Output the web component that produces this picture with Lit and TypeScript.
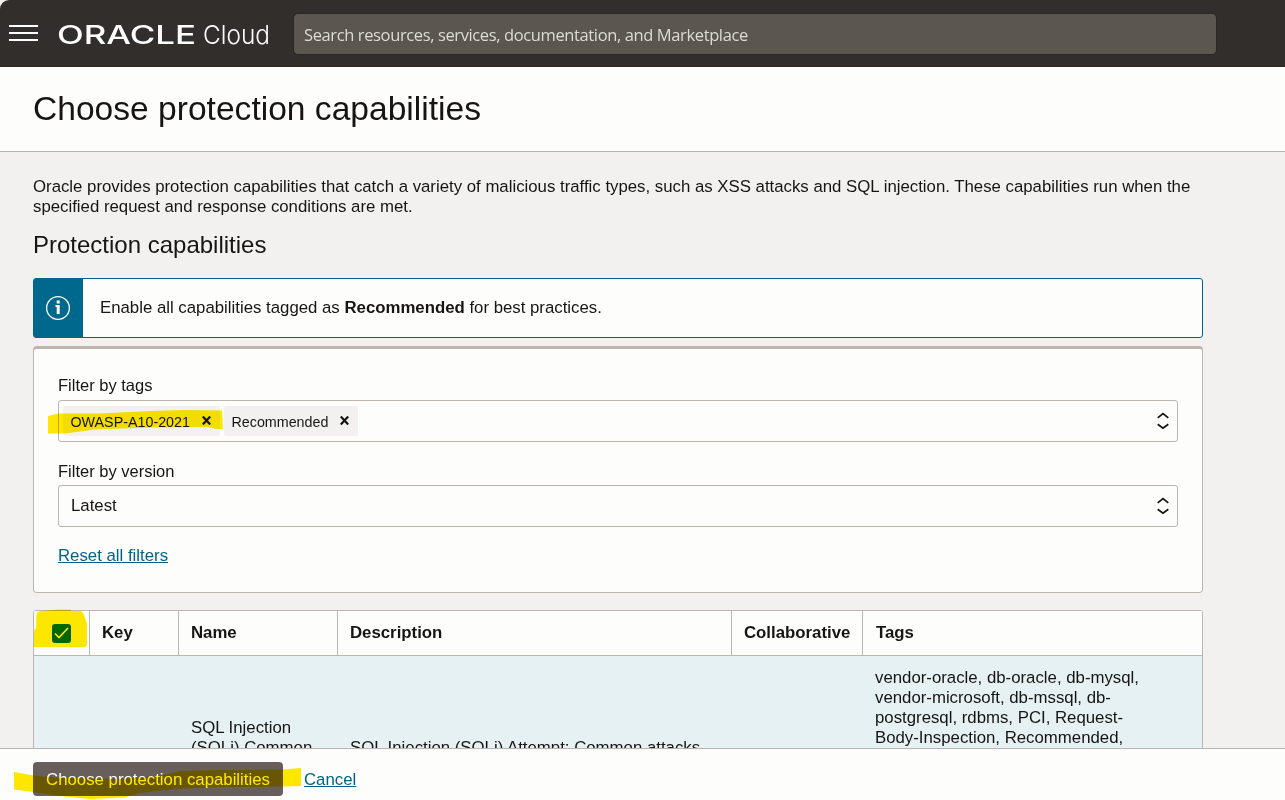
import { LitElement, html, css, svg } from "lit";
import { customElement } from "lit/decorators.js";

const stepper = html`<svg class="stepper" width="14" height="20" viewBox="0 0 14 20">
  <path d="M1.700 6.900 7 2.500l5.300 4.400M1.700 13.300 7 17.300l5.300-4" />
</svg>`;

const cross = html`<svg class="cross" width="9" height="9" viewBox="0 0 9 9">
  <path d="M.8 .5 8.200 8.500M8.200 .5 .8 8.500" />
</svg>`;

@customElement("app-root")
export class AppRoot extends LitElement {
  static styles = css`
    :host {
      display: flex;
      flex-direction: column;
      position: relative;
      width: 1285px;
      height: 800px;
      overflow: hidden;
      background: #f3f1f0;
      color: #161513;
      font: 16.8px/20px "Liberation Sans", Arial, sans-serif;
      isolation: isolate;
    }
    * { box-sizing: border-box; }
    h1, h2, p { margin: 0; font-weight: 400; }
    a { color: #006488; text-decoration: underline; text-underline-offset: 1px; text-decoration-thickness: 1px; }
    .bar {
      flex: none;
      display: flex;
      align-items: flex-start;
      height: 67px;
      background: linear-gradient(#322e2b 65px, #292623);
      border-top-left-radius: 9px;
      padding: 13px 0 0 9px;
    }
    .burger { margin-top: 11px; flex: none; }
    .logo { flex: none; margin: 0 0 0 18px; overflow: visible; }
    .brand { font-family: Inter, sans-serif; font-weight: 500; font-size: 25.5px; fill: #fff; }
    .cloud { font-family: Inter, sans-serif; font-weight: 300; font-size: 26px; fill: #fff; }
    .search {
      margin-left: 20px;
      width: 924px;
      height: 42px;
      background: #5b564f;
      border: 1px solid #292623;
      border-radius: 5px;
      color: #dedbd7;
      font: 16.5px/40px "Open Sans", "Noto Sans", sans-serif;
      letter-spacing: -0.38px;
      padding: 1px 0 0 10px;
      white-space: nowrap;
    }
    .title {
      flex: none;
      height: 85px;
      background: #fdfdfc;
      border-bottom: 1px solid #b9b6b1;
      padding: 22px 33px 0;
    }
    .title h1 { font-size: 33.6px; line-height: 40px; white-space: nowrap; }
    .content { flex: 1; min-height: 0; overflow: hidden; padding: 25px 82px 0 33px; }
    .lead { width: 1170px; white-space: nowrap; }
    h2 { font-size: 24px; line-height: 28px; margin-top: 14px; }
    .info {
      display: flex;
      align-items: stretch;
      height: 60px;
      margin-top: 19px;
      border: 1px solid #006488;
      border-radius: 3px;
      background: #fdfdfc;
    }
    .info-icon { width: 49px; background: #00688c; display: flex; align-items: center; justify-content: center; }
    .info-icon svg { margin-right: 2px; }
    .info p { padding: 19px 0 0 17px; }
    .filters {
      margin-top: 8px;
      height: 247px;
      border: 1px solid #bcb6b1;
      border-top-width: 3px;
      border-radius: 4px;
      background: #fdfdfc;
      padding: 26px 24px 0;
    }
    .label { font-size: 16.5px; }
    .box {
      display: flex;
      align-items: center;
      height: 42px;
      margin: 5px 0 19px;
      border: 1px solid #bcb6b1;
      border-radius: 3px;
      padding: 0 7px 0 4px;
    }
    .version { margin: 4px 0 19px; padding-left: 12px; }
    .chip {
      display: flex;
      align-items: center;
      height: 30px;
      background: #f3f1f0;
      border-radius: 2px;
      font-size: 14.3px;
      padding: 2px 9px 0 7.5px;
      margin-right: 4.5px;
    }
    .chip + .chip { padding-left: 7px; }
    .chip .cross { margin: -4px 0 0 12px; }
    .cross path { fill: none; stroke: #161513; stroke-width: 2.2; }
    .stepper { margin-left: auto; }
    .stepper path { fill: none; stroke: #161513; stroke-width: 1.7; }
    .table {
      display: grid;
      grid-template-columns: 56px 89px 159px 394px 131px 339px;
      margin-top: 17px;
      border: 1px solid #bcb6b1;
      border-radius: 3px 3px 0 0;
      background: #e6f1f4;
    }
    .th {
      height: 45px;
      font-weight: 700;
      background: #fdfdfc;
      border-right: 1px solid #bcb6b1;
      border-bottom: 1px solid #bcb6b1;
      padding: 12px 0 0 12px;
      white-space: nowrap;
    }
    .th.last { border-right: 0; padding-left: 13px; }
    .th.check { padding: 13px 0 0 18px; }
    .td { padding: 12px 12px; height: 164px; white-space: nowrap; }
    .name { padding-top: 62px; }
    .desc { padding-top: 82px; }
    .footer {
      flex: none;
      display: flex;
      align-items: flex-start;
      height: 52px;
      background: #fdfdfc;
      border-top: 1px solid #b9b4af;
      padding: 13px 33px 0;
    }
    .button {
      width: 250px;
      height: 34px;
      border: 0;
      border-radius: 4px;
      background: #685f5c;
      color: #fff;
      font: inherit;
      line-height: 32px;
      padding: 2px 0 0;
      text-align: center;
      white-space: nowrap;
    }
    .footer a { margin: 8px 0 0 21px; }
    .marker { position: absolute; left: 0; top: 0; mix-blend-mode: multiply; pointer-events: none; fill: #ffe900; }
  `;

  render() {
    return html`
      <header class="bar">
        <svg class="burger" width="30" height="18" viewBox="0 0 30 18">
          <path d="M0 2h29M0 9h29M0 16h29" stroke="#fff" stroke-width="2" />
        </svg>
        <svg class="logo" width="216" height="42" viewBox="0 0 216 42">
          <text class="brand" x="0" y="30.600" textLength="139" lengthAdjust="spacingAndGlyphs">ORACLE</text>
          <text class="cloud" x="146" y="30.600" textLength="67" lengthAdjust="spacingAndGlyphs">Cloud</text>
        </svg>
        <div class="search">Search resources, services, documentation, and Marketplace</div>
      </header>
      <div class="title"><h1>Choose protection capabilities</h1></div>
      <main class="content">
        <p class="lead">Oracle provides protection capabilities that catch a variety of malicious traffic types, such as XSS attacks and SQL injection. These capabilities run when the<br />specified request and response conditions are met.</p>
        <h2>Protection capabilities</h2>
        <div class="info">
          <div class="info-icon">
            <svg width="26" height="26" viewBox="0 0 26 26">
              <circle cx="13" cy="13" r="11.400" fill="none" stroke="#fff" stroke-width="1.300" />
              <path d="M11.700 5.500h3v3h-3zM10.500 10h4.200v9h-3v-7h-1.200z" fill="#fff" />
            </svg>
          </div>
          <p>Enable all capabilities tagged as <b>Recommended</b> for best practices.</p>
        </div>
        <section class="filters">
          <div class="label">Filter by tags</div>
          <div class="box">
            <span class="chip">OWASP-A10-2021${cross}</span>
            <span class="chip">Recommended${cross}</span>
            ${stepper}
          </div>
          <div class="label">Filter by version</div>
          <div class="box version">Latest${stepper}</div>
          <a>Reset all filters</a>
        </section>
        <div class="table">
          <div class="th check">
            <svg width="19" height="19" viewBox="0 0 19 19">
              <rect width="19" height="19" rx="3" fill="#007000" />
              <path d="m3 9.500 4 4 9-9.500" fill="none" stroke="#fff" stroke-width="1.600" />
            </svg>
          </div>
          <div class="th">Key</div>
          <div class="th">Name</div>
          <div class="th">Description</div>
          <div class="th">Collaborative</div>
          <div class="th last">Tags</div>
          <div class="td"></div>
          <div class="td"></div>
          <div class="td name">SQL Injection<br />(SQLi) Common</div>
          <div class="td desc">SQL Injection (SQLi) Attempt: Common attacks</div>
          <div class="td"></div>
          <div class="td">vendor-oracle, db-oracle, db-mysql,<br />vendor-microsoft, db-mssql, db-<br />postgresql, rdbms, PCI, Request-<br />Body-Inspection, Recommended,</div>
        </div>
      </main>
      <footer class="footer">
        <button class="button">Choose protection capabilities</button>
        <a>Cancel</a>
      </footer>
      <svg class="marker" width="1285" height="800" viewBox="0 0 1285 800">
        ${svg`
          <path d="M48 416 58 413.500 100 413.500 150 411 185 410 222 410.500 223 429 216 429 208 427 150 427.500 95 429.500 65 433.500 48 433.500Z" />
          <path d="M36.500 615Q37 611 42 611L58 609.500 71 609.500 71 611 81 611Q84 613 85 618L87 624V644Q87 647 84 647L34 647V630L36 628.500Z" />
          <path d="M14 772 34 775.500 60 778 120 779 160 776 180 771 220 770 283 769.500 301 768V786L283 786.500 220 787 175 789 140 793 125 797.500 90 799 60 796 33 792 14 789.500Z" />
        `}
      </svg>
    `;
  }
}
